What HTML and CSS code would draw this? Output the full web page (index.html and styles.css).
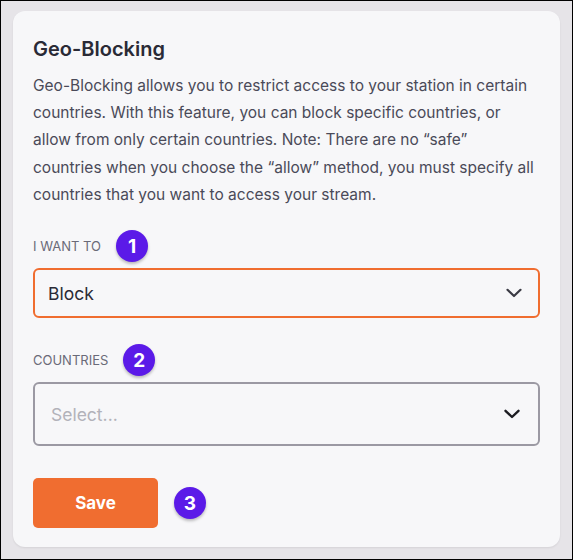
FILE: index.html
```html
<!DOCTYPE html>
<html>
<head>
<meta charset="utf-8">
<link rel="stylesheet" href="styles.css">
</head>
<body>
<div class="frame">
  <section class="card">
    <h2 class="title">Geo-Blocking</h2>
    <p class="desc">Geo-Blocking allows you to restrict access to your station in certain<br>countries. With this feature, you can block specific countries, or<br>allow from only certain countries. Note: There are no “safe”<br>countries when you choose the “allow” method, you must specify all<br>countries that you want to access your stream.</p>

    <div class="field field-first">
      <div class="label-row"><span class="label">I WANT TO</span><span class="badge">1</span></div>
      <div class="select select-active">
        <span class="value">Block</span>
        <svg class="chev" width="16" height="10" viewBox="0 0 16 10"><path d="M1.5 1.8 L8 8 L14.5 1.8" fill="none" stroke="#3a3a44" stroke-width="2.2" stroke-linecap="round" stroke-linejoin="round"/></svg>
      </div>
    </div>

    <div class="field">
      <div class="label-row"><span class="label">COUNTRIES</span><span class="badge">2</span></div>
      <div class="select select-tall">
        <span class="placeholder">Select...</span>
        <svg class="chev" width="16" height="10" viewBox="0 0 16 10"><path d="M1.5 1.8 L8 8 L14.5 1.8" fill="none" stroke="#1c1c22" stroke-width="2.4" stroke-linecap="round" stroke-linejoin="round"/></svg>
      </div>
    </div>

    <div class="actions">
      <button class="save">Save</button>
      <span class="badge">3</span>
    </div>
  </section>
</div>
</body>
</html>
```
FILE: styles.css
```css
* { box-sizing: border-box; }
html, body { margin: 0; padding: 0; }
body {
  font-family: Inter, "Noto Sans", sans-serif;
  background: #e6e4e8;
}
.frame {
  width: 573px;
  height: 560px;
  border: 1px solid #000;
  padding: 10px 12px 12px 12px;
}
.card {
  background: #f7f7f9;
  border-radius: 12px;
  height: 100%;
  padding: 26px 20px 0 20px;
  box-shadow: 0 1px 2px rgba(0,0,0,0.08);
}
.title {
  margin: 0;
  font-size: 20px;
  font-weight: 600;
  color: #2a2a36;
  line-height: 24px;
}
.desc {
  margin: 11px 0 0 0;
  font-size: 15.5px;
  line-height: 27.2px;
  color: #4a4a58;
  white-space: nowrap;
}
.field { margin-top: 26px; }
.field-first { margin-top: 22px; }
.label-row {
  display: flex;
  align-items: center;
  gap: 15px;
  height: 32px;
}
.label {
  font-size: 13px;
  color: #6a6a78;
}
.badge {
  width: 32px;
  height: 32px;
  border-radius: 50%;
  background: #5b1ae8;
  color: #fff;
  font-weight: 700;
  font-size: 19px;
  display: inline-flex;
  align-items: center;
  justify-content: center;
  box-shadow: 0 2px 3px rgba(0,0,0,0.25);
}
.select {
  margin-top: 6px;
  height: 50px;
  border: 2px solid #9b99a3;
  border-radius: 6px;
  display: flex;
  align-items: center;
  justify-content: space-between;
  padding: 0 16px 0 13px;
}
.select-active { border-color: #f06d30; }
.select-tall { height: 64px; padding-left: 16px; padding-right: 18px; }
.value { font-size: 17.5px; color: #2a2a36; }
.placeholder { font-size: 17.5px; color: #b2b2ba; }
.actions {
  margin-top: 32px;
  display: flex;
  align-items: center;
  gap: 16px;
}
.save {
  width: 125px;
  height: 50px;
  border: none;
  border-radius: 5px;
  background: #f06d30;
  color: #fff;
  font-family: Inter, "Noto Sans", sans-serif;
  font-weight: 700;
  font-size: 17px;
}
```
